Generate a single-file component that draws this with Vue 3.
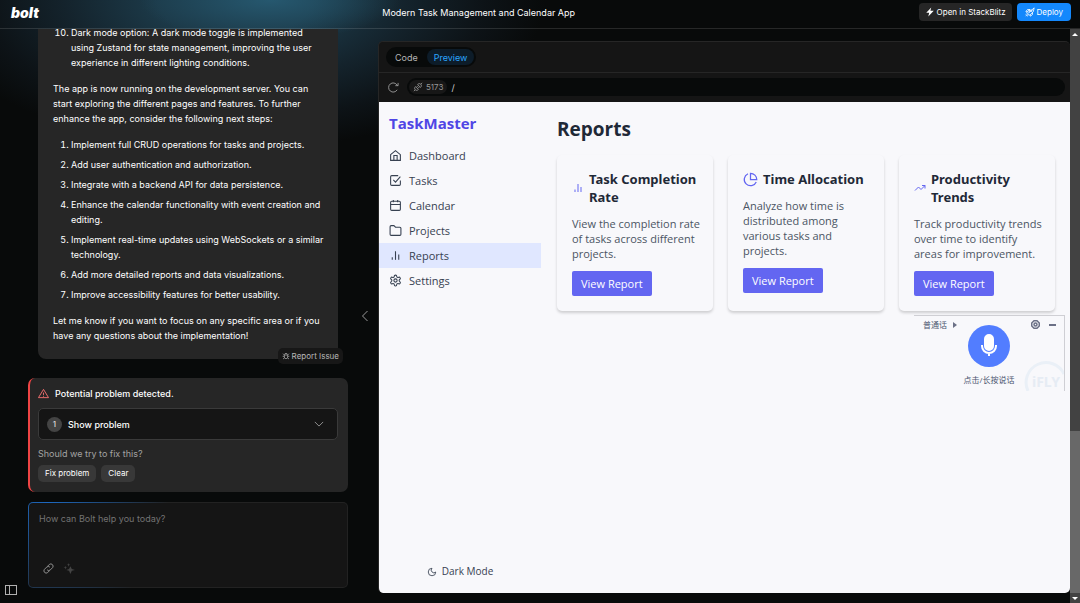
<script setup>
import { ref } from 'vue'

const steps = [
  'Implement full CRUD operations for tasks and projects.',
  'Add user authentication and authorization.',
  'Integrate with a backend API for data persistence.',
  'Enhance the calendar functionality with event creation and editing.',
  'Implement real-time updates using WebSockets or a similar technology.',
  'Add more detailed reports and data visualizations.',
  'Improve accessibility features for better usability.',
]

const nav = [
  { label: 'Dashboard', icon: 'home' },
  { label: 'Tasks', icon: 'check' },
  { label: 'Calendar', icon: 'calendar' },
  { label: 'Projects', icon: 'folder' },
  { label: 'Reports', icon: 'bars' },
  { label: 'Settings', icon: 'gear' },
]

const reports = [
  { title: 'Task Completion Rate', icon: 'bars', text: 'View the completion rate of tasks across different projects.' },
  { title: 'Time Allocation', icon: 'pie', text: 'Analyze how time is distributed among various tasks and projects.' },
  { title: 'Productivity Trends', icon: 'trend', text: 'Track productivity trends over time to identify areas for improvement.' },
]

const icons = {
  home: ['M3 10.5 12 3l9 7.5V21H3z', 'M9 21v-9h6v9'],
  check: ['M21 12v7a2 2 0 0 1-2 2H5a2 2 0 0 1-2-2V5a2 2 0 0 1 2-2h12', 'm8 11 4 4 9-10'],
  calendar: ['M5 4h14a2 2 0 0 1 2 2v13a2 2 0 0 1-2 2H5a2 2 0 0 1-2-2V6a2 2 0 0 1 2-2z', 'M3 10h18', 'M8 2v4', 'M16 2v4'],
  folder: ['M2 5a2 2 0 0 1 2-2h5l3 3h8a2 2 0 0 1 2 2v11a2 2 0 0 1-2 2H4a2 2 0 0 1-2-2z'],
  bars: ['M6 20v-5', 'M12 20V4', 'M18 20V10'],
  gear: [
    'M12.2 2h-.4a2 2 0 0 0-2 2v.2a2 2 0 0 1-1 1.7l-.4.3a2 2 0 0 1-2 0l-.2-.1a2 2 0 0 0-2.7.7l-.2.4a2 2 0 0 0 .7 2.7l.2.1a2 2 0 0 1 1 1.7v.5a2 2 0 0 1-1 1.8l-.2.1a2 2 0 0 0-.7 2.7l.2.4a2 2 0 0 0 2.7.7l.2-.1a2 2 0 0 1 2 0l.4.3a2 2 0 0 1 1 1.7v.2a2 2 0 0 0 2 2h.4a2 2 0 0 0 2-2v-.2a2 2 0 0 1 1-1.7l.4-.3a2 2 0 0 1 2 0l.2.1a2 2 0 0 0 2.7-.7l.2-.4a2 2 0 0 0-.7-2.7l-.2-.1a2 2 0 0 1-1-1.8v-.5a2 2 0 0 1 1-1.7l.2-.1a2 2 0 0 0 .7-2.7l-.2-.4a2 2 0 0 0-2.7-.7l-.2.1a2 2 0 0 1-2 0l-.4-.3a2 2 0 0 1-1-1.7V4a2 2 0 0 0-2-2z',
    'M12 9a3 3 0 1 0 0 6 3 3 0 0 0 0-6z',
  ],
  pie: ['M21.2 15.9A10 10 0 1 1 8 2.8', 'M22 12A10 10 0 0 0 12 2v10z'],
  trend: ['m2 17 7-7 5 5 8-8', 'M16 7h6v6'],
}

const prompt = ref('')
const path = ref('/')
</script>

<template>
  <div class="page">
    <header class="topbar">
      <a class="logo" href="#">bolt</a>
      <h1 class="project">Modern Task Management and Calendar App</h1>
      <div class="actions">
        <button class="action" type="button">
          <svg class="i10" viewBox="0 0 24 24" fill="currentColor"><path d="M15 1 3 14h7l-2 9 13-14h-8z" /></svg>
          Open in StackBlitz
        </button>
        <button class="action deploy" type="button">
          <svg class="i10 line" viewBox="0 0 24 24"><path d="M9 14 22 2l-2 9-9 9-7-7 8-8z" /><path d="M11 6H6l-4 5 4 1M18 13v5l-5 4-1-4M6 17l-4 5M3 16l-1 2M8 20l-3 2" /><circle cx="15" cy="9" r="2" /></svg>
          Deploy
        </button>
      </div>
    </header>

    <main class="body">
      <div class="rail">
        <button class="bare" type="button" aria-label="Toggle sidebar">
          <svg class="panel" viewBox="0 0 12 10" shape-rendering="crispEdges"><path d="M.5.5h11v9H.5zM4.500.5v9" /></svg>
        </button>
      </div>

      <section class="chat">
        <div class="messages">
          <article class="message">
            <ol start="10" class="steps">
              <li>Dark mode option: A dark mode toggle is implemented using Zustand for state management, improving the user experience in different lighting conditions.</li>
            </ol>
            <p>The app is now running on the development server. You can start exploring the different pages and features. To further enhance the app, consider the following next steps:</p>
            <ol class="steps">
              <li v-for="s in steps" :key="s">{{ s }}</li>
            </ol>
            <p>Let me know if you want to focus on any specific area or if you have any questions about the implementation!</p>
            <button class="report" type="button">
              <svg class="i8 line" viewBox="0 0 24 24"><path d="M7 9h10v6a5 5 0 0 1-10 0zM8 8a4 4 0 0 1 8 0M2 13h5M17 13h5M3 5l4 4M21 5l-4 4M3 21l4-3M21 21l-4-3" /></svg>
              Report Issue
            </button>
          </article>
        </div>

        <section class="alert">
          <h2 class="alert-title">
            <svg class="warn" viewBox="0 0 24 24"><path d="M12 3 23 21H1z" /><path d="M12 10v5M12 17v2" /></svg>
            Potential problem detected.
          </h2>
          <button class="problem" type="button">
            <span class="count">1</span>
            <span class="problem-label">Show problem</span>
            <svg class="i10 line" viewBox="0 0 24 24"><path d="m2 7 10 10L22 7" /></svg>
          </button>
          <p class="ask">Should we try to fix this?</p>
          <div class="fixes">
            <button class="fix" type="button">Fix problem</button>
            <button class="fix" type="button">Clear</button>
          </div>
        </section>

        <form class="composer" @submit.prevent>
          <textarea v-model="prompt" class="prompt" aria-label="Message" placeholder="How can Bolt help you today?"></textarea>
          <div class="tools">
            <button class="bare" type="button" aria-label="Attach link">
              <svg class="i12 line" viewBox="0 0 24 24"><path d="m10 7 4-4a5 5 0 0 1 7 7l-5 5a5 5 0 0 1-7 0M14 17l-4 4a5 5 0 0 1-7-7l5-5a5 5 0 0 1 7 0" /></svg>
            </button>
            <button class="bare dim" type="button" aria-label="Enhance prompt">
              <svg class="i12" viewBox="0 0 24 24" fill="currentColor"><path d="m14 7 3 6 7 2-7 2-3 7-3-7-6-2 6-2zM10 0l1 3 3 1-3 1-1 3-1-3-3-1 3-1zM3 6l1 3 3 1-3 1-1 3-1-3-3-1 3-1z" /></svg>
            </button>
          </div>
        </form>
      </section>

      <div class="divider">
        <button class="bare" type="button" aria-label="Collapse chat">
          <svg class="chevron" viewBox="0 0 8 12"><path d="M6.500 1 1.500 6l5 5" /></svg>
        </button>
      </div>

      <section class="bench">
        <div class="tabs">
          <div class="switch">
            <button class="tab" type="button">Code</button>
            <button class="tab on" type="button">Preview</button>
          </div>
        </div>
        <div class="address">
          <button class="bare" type="button" aria-label="Reload">
            <svg class="i12 line" viewBox="0 0 24 24"><path d="M20 17a10 10 0 1 1 0-10l2 1M22 2v6h-6" /></svg>
          </button>
          <div class="url">
            <button class="port" type="button">
              <svg class="i10 line" viewBox="0 0 24 24"><path d="m6 11 7 7-3 2a5 5 0 0 1-6-6zM2 22l3-3M11 6l7 7 2-3a5 5 0 0 0-6-6zM19 5l3-3M9 12l3-3M12 15l3-3" /></svg>
              5173
            </button>
            <input v-model="path" class="path" aria-label="Preview path" />
          </div>
        </div>

        <div class="preview">
          <aside class="side">
            <h2 class="brand">TaskMaster</h2>
            <nav class="nav">
              <a v-for="n in nav" :key="n.label" href="#" :class="['link', { current: n.label === 'Reports' }]">
                <svg class="i13" viewBox="0 0 24 24"><path v-for="d in icons[n.icon]" :key="d" :d="d" /></svg>
                {{ n.label }}
              </a>
            </nav>
            <button class="dark" type="button">
              <svg class="i10 line" viewBox="0 0 24 24"><path d="M12 3a6 6 0 0 0 9 9 9 9 0 1 1-9-9z" /></svg>
              Dark Mode
            </button>
          </aside>

          <div class="content">
            <h2 class="heading">Reports</h2>
            <div class="cards">
              <article v-for="r in reports" :key="r.title" class="card">
                <h3 class="card-title">
                  <svg :class="['card-icon', r.icon]" viewBox="0 0 24 24"><path v-for="d in icons[r.icon]" :key="d" :d="d" /></svg>
                  {{ r.title }}
                </h3>
                <p class="card-text">{{ r.text }}</p>
                <button class="view" type="button">View Report</button>
              </article>
            </div>
          </div>

          <div class="voice">
            <svg class="mark" viewBox="0 0 39 30"><path d="M3 30A18.500 18.500 0 0 1 39 13" /><text x="7" y="26">iFLY</text></svg>
            <div class="voice-bar">
              <button class="bare lang" type="button">普通话 <svg class="tri" viewBox="0 0 4 6"><path d="m0 0 4 3-4 3z" /></svg></button>
              <button class="bare" type="button" aria-label="Voice settings">
                <svg class="i9" viewBox="0 0 24 24"><path d="M8 2h8l6 6v8l-6 6H8l-6-6V8z" /><circle cx="12" cy="12" r="4" /></svg>
              </button>
              <button class="bare" type="button" aria-label="Minimize">
                <svg class="minus" viewBox="0 0 7 2"><path d="M0 1h7" /></svg>
              </button>
            </div>
            <button class="mic" type="button" aria-label="Record">
              <svg viewBox="0 0 16 22"><rect x="4" y="0" width="8" height="15" rx="4" fill="#fff" /><path d="M1 10v1a7 7 0 0 0 14 0v-1M8 18v3" /></svg>
            </button>
            <span class="hint">点击/长按说话</span>
          </div>
        </div>
      </section>

      <div class="scroll" aria-hidden="true">
        <svg viewBox="0 0 10 10"><path d="M2 7h6L5 4z" /></svg>
        <div class="track"><div class="thumb"></div></div>
        <svg viewBox="0 0 10 10"><path d="M2 4h6L5 7z" /></svg>
      </div>
    </main>
  </div>
</template>

<style>
body {
  margin: 0;
  background: #080a0a;
}
</style>

<style scoped>
* {
  box-sizing: border-box;
}
.page {
  height: 100vh;
  display: flex;
  flex-direction: column;
  overflow: hidden;
  color: #fff;
  font: 9px/15px Inter, "Liberation Sans", sans-serif;
  background:
    radial-gradient(ellipse 130px 40px at 270px 0, #26586f, transparent),
    radial-gradient(ellipse 310px 150px at 235px 0, #1c3a49 25%, #14232c 55%, #0d1317 80%, transparent),
    #080a0a;
}
h1, h2, h3, p, ol {
  margin: 0;
}
button {
  font: inherit;
  color: inherit;
  border: 0;
  padding: 0;
  background: none;
  display: flex;
  align-items: center;
  white-space: nowrap;
}
svg {
  display: block;
  flex: none;
  overflow: visible;
}
.line {
  fill: none;
  stroke: currentColor;
  stroke-width: 2;
}
.i8 { width: 8px; height: 8px; }
.i9 { width: 9px; height: 9px; fill: none; stroke: #6b7086; stroke-width: 4; }
.i10 { width: 10px; height: 10px; }
.i12 { width: 11px; height: 11px; }
.i13 {
  width: 13px;
  height: 13px;
  fill: none;
  stroke: currentColor;
  stroke-width: 2;
}

.topbar {
  flex: none;
  height: 29px;
  display: flex;
  align-items: center;
  padding: 0 9px 4px 11px;
  border-bottom: 1px solid #ffffff20;
}
.logo {
  color: #fff;
  text-decoration: none;
  font-size: 14px;
  font-weight: 900;
  font-style: italic;
}
.project {
  flex: 1;
  text-align: center;
  font-size: 9px;
  font-weight: 400;
}
.actions {
  display: flex;
  gap: 5px;
}
.action {
  height: 18px;
  padding: 0 6px;
  gap: 2px;
  font-size: 8px;
  font-weight: 400;
  border-radius: 4px;
  background: #262626;
}
.deploy {
  padding: 0 8px;
  background: #1488fc;
}

.body {
  flex: 1;
  min-height: 0;
  display: grid;
  grid-template-columns: 28px minmax(240px, 320px) 30px minmax(0, 1fr) 10px;
}
.rail {
  display: flex;
  align-items: flex-end;
  padding: 0 0 8px 5px;
}
.panel {
  width: 12px;
  height: 10px;
  fill: none;
  stroke: #b0b0b0;
}
.chat {
  min-height: 0;
  display: flex;
  flex-direction: column;
  padding-bottom: 15px;
}
.messages {
  flex: 1;
  min-height: 0;
  padding: 0 5px 19px 10px;
  overflow: hidden;
  display: flex;
  flex-direction: column;
  justify-content: flex-end;
}
.message {
  position: relative;
  flex: none;
  margin-right: 5px;
  padding: 15px 10px 15px 15px;
  border-radius: 8px;
  background: #262626;
  font-weight: 400;
}
.steps {
  padding-left: 18px;
  display: grid;
  gap: 5px;
}
.message p {
  margin: 11px 0;
}
.message p:last-of-type {
  margin: 11px 0 1px;
}
.report {
  position: absolute;
  right: -5px;
  bottom: -5px;
  height: 16px;
  padding: 0 4px;
  gap: 2px;
  border-radius: 5px;
  background: #171717;
  color: #b8b8b8;
  font-size: 8px;
}

.alert {
  flex: none;
  padding: 8px 10px 10px 8px;
  border-left: 2px solid #ef4444;
  border-radius: 7px;
  background: #262626;
}
.alert-title {
  display: flex;
  align-items: center;
  gap: 6px;
  font-size: 9px;
  font-weight: 500;
}
.warn {
  width: 11px;
  height: 11px;
  fill: none;
  stroke: #f87171;
  stroke-width: 2;
}
.problem {
  width: 100%;
  height: 32px;
  margin: 7px 0 6px;
  padding: 0 13px 0 8px;
  gap: 6px;
  border: 1px solid #3a3a3a;
  border-radius: 5px;
  background: #151515;
  font-weight: 500;
}
.problem svg {
  color: #a3a3a3;
}
.count {
  width: 15px;
  height: 15px;
  display: grid;
  place-items: center;
  border-radius: 50%;
  background: #444;
  font-size: 8px;
  color: #ddd;
}
.problem-label {
  flex: 1;
  text-align: left;
}
.ask {
  color: #a3a3a3;
}
.fixes {
  display: flex;
  gap: 5px;
  margin-top: 4px;
}
.fix {
  height: 17px;
  padding: 0 7px;
  border-radius: 5px;
  background: #383838;
  font-size: 8px;
  font-weight: 400;
}
.composer {
  flex: none;
  margin-top: 10px;
  padding: 8px 10px 12px;
  border: 1px solid transparent;
  border-radius: 5px;
  background:
    linear-gradient(#151515, #151515) padding-box,
    radial-gradient(circle 120px at 20px 0, #1d68c0, #222) border-box;
}
.prompt {
  display: block;
  width: 100%;
  height: 46px;
  padding: 0;
  border: 0;
  outline: 0;
  resize: none;
  background: none;
  color: #fff;
  font: inherit;
}
.prompt::placeholder {
  color: #737373;
}
.tools {
  display: flex;
  gap: 10px;
  padding: 6px 4px 1px;
  color: #999;
}
.dim {
  color: #444;
}
.divider {
  display: flex;
  align-items: center;
  justify-content: flex-end;
  padding-right: 9px;
}
.chevron {
  width: 8px;
  height: 12px;
  fill: none;
  stroke: #999;
}

.bench {
  margin: 12px 0 10px;
  min-width: 0;
  display: flex;
  flex-direction: column;
  border: 1px solid #262626;
  border-width: 1px 0 0 1px;
  border-radius: 5px;
  overflow: hidden;
  background: #151515;
}
.tabs {
  padding: 5px 7px;
  border-bottom: 1px solid #262626;
}
.switch {
  width: max-content;
  display: flex;
  gap: 2px;
  padding: 2px;
  border-radius: 10px;
  background: #080a0a;
}
.tab {
  height: 16px;
  padding: 0 7px;
  border-radius: 8px;
  font-size: 9px;
  color: #b5b5b5;
}
.tab.on {
  background: #0d1c29;
  color: #2ba6ff;
}
.address {
  display: flex;
  align-items: center;
  gap: 8px;
  padding: 5px 5px 6px 9px;
  color: #999;
}
.url {
  flex: 1;
  display: flex;
  align-items: center;
  gap: 4px;
  padding: 2px;
  border-radius: 9px;
  background: #080a0a;
}
.port {
  height: 14px;
  padding: 0 4px;
  gap: 3px;
  border-radius: 7px;
  background: #171717;
  font-size: 8px;
}
.path {
  flex: 1;
  height: 14px;
  padding: 0;
  border: 0;
  outline: 0;
  background: none;
  color: #ccc;
  font: inherit;
}

.preview {
  position: relative;
  flex: 1;
  min-height: 0;
  display: grid;
  grid-template-columns: 162px minmax(0, 1fr);
  background: #f8f8fb;
  color: #1f2937;
  font: 11px/15px "Open Sans", "Noto Sans CJK SC", sans-serif;
}
.side {
  display: flex;
  flex-direction: column;
  padding: 10px 0 14px;
}
.brand {
  padding: 0 10px;
  font-size: 15px;
  line-height: 22px;
  color: #4f46e5;
}
.nav {
  flex: 1;
  margin-top: 9px;
}
.link {
  display: flex;
  align-items: center;
  gap: 7px;
  padding: 5px 10px;
  color: #374151;
  text-decoration: none;
}
.current {
  background: #e0e7ff;
}
.dark {
  align-self: center;
  gap: 5px;
  font-size: 10px;
  color: #374151;
}
.content {
  padding: 15px 15px 15px 16px;
}
.heading {
  font-size: 19px;
  line-height: 24px;
}
.cards {
  display: grid;
  grid-template-columns: repeat(3, minmax(0, 1fr));
  gap: 15px;
  margin-top: 14px;
}
.card {
  padding: 15px 9px 15px 15px;
  border-radius: 5px;
  background: #f8f8fb;
  box-shadow: 0 2px 3px #0000002b;
}
.card-title {
  display: flex;
  align-items: center;
  gap: 5px;
  font-size: 13px;
  line-height: 18px;
  font-family: "Noto Sans", sans-serif;
}
.card-icon {
  width: 15px;
  height: 15px;
  fill: none;
  stroke: #6366f1;
  stroke-width: 2;
}
.card-icon.bars,
.card-icon.trend {
  width: 12px;
  height: 12px;
}
.card-text {
  margin: 10px 0;
  color: #4b5563;
}
.view {
  padding: 5px 9px;
  border-radius: 2px;
  background: #6366f1;
  color: #fff;
}

.voice {
  position: absolute;
  top: 213px;
  right: 5px;
  width: 151px;
  height: 76px;
  overflow: hidden;
  border: 1px solid #cfcfd4;
  border-width: 1px 1px 0 0;
  color: #4c5670;
  font-size: 8px;
}
.voice-bar {
  display: flex;
  align-items: center;
  gap: 9px;
  padding: 1px 8px 0 9px;
}
.voice-bar .lang {
  margin-right: auto;
  gap: 6px;
}
.tri {
  width: 4px;
  height: 6px;
  fill: #6b7086;
}
.minus {
  width: 7px;
  height: 2px;
  stroke: #6b7086;
  stroke-width: 2;
}
.mic {
  width: 42px;
  height: 42px;
  margin: -7px auto 5px;
  justify-content: center;
  border-radius: 50%;
  background: #527dff;
}
.mic svg {
  width: 16px;
  height: 22px;
  fill: none;
  stroke: #fff;
  stroke-width: 2;
}
.hint {
  display: block;
  text-align: center;
}
.mark {
  position: absolute;
  right: 0;
  bottom: 0;
  width: 39px;
  height: 30px;
  fill: none;
  stroke: #eaf0f7;
  stroke-width: 3;
}
.mark text {
  fill: #e6ecf4;
  stroke: none;
  font: 700 14px "Noto Sans", sans-serif;
}

.scroll {
  display: flex;
  flex-direction: column;
  background: #424242;
}
.scroll svg {
  width: 10px;
  height: 10px;
  fill: #fff;
}
.track {
  flex: 1;
  display: grid;
  grid-template-rows: 392fr 162fr;
}
.thumb {
  grid-row: 2;
  background: #686868;
}
</style>
